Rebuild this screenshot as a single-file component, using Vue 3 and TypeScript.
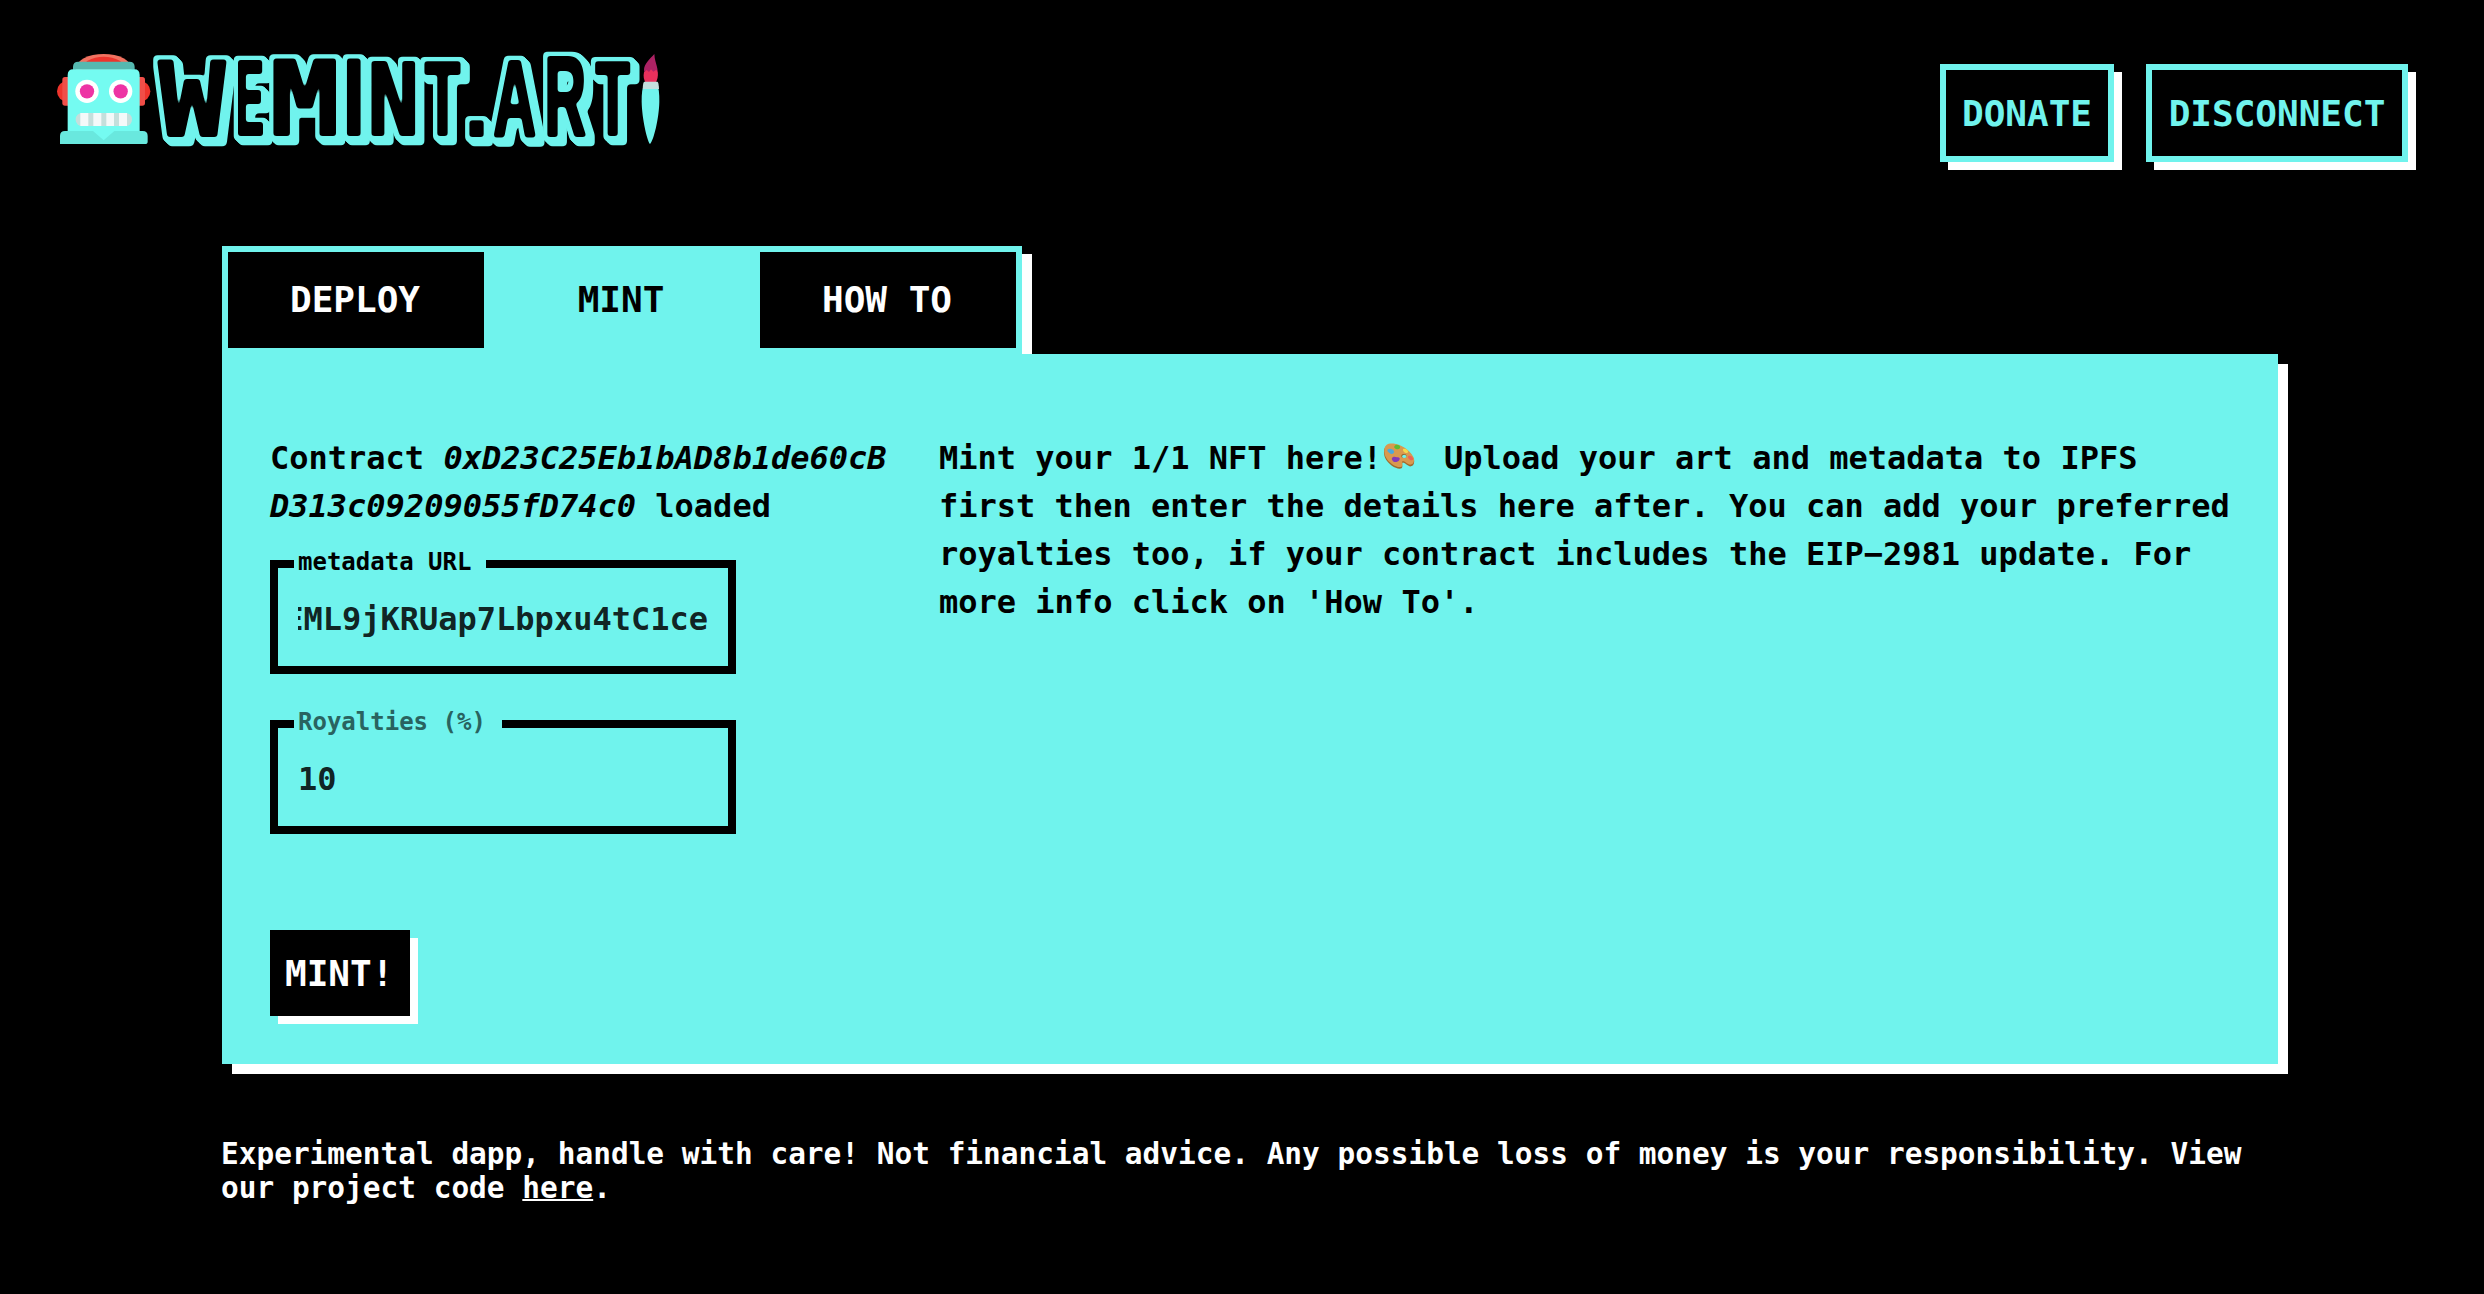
<script setup lang="ts">
import { ref } from 'vue'

interface LogoLetter {
  char: string
  left: number
  right: number
  top: number
  bottom: number
  inkLeft: number
  inkRight: number
  mono?: boolean
}

// Target boxes in logo units, and each glyph's ink extent at a 100 unit font size.
const letters: LogoLetter[] = [
  { char: 'W', left: 352, right: 560, top: 87, bottom: 321, inkLeft: 0, inkRight: 60.2, mono: true },
  { char: 'E', left: 595, right: 668, top: 91, bottom: 318, inkLeft: 7.3, inkRight: 61.7 },
  { char: 'M', left: 698, right: 890, top: 87, bottom: 319, inkLeft: 3.6, inkRight: 56.6, mono: true },
  { char: 'I', left: 921, right: 962, top: 85, bottom: 317, inkLeft: 6.9, inkRight: 21.3 },
  { char: 'N', left: 990, right: 1130, top: 93, bottom: 319, inkLeft: 4.1, inkRight: 56.1, mono: true },
  { char: 'T', left: 1155, right: 1260, top: 91, bottom: 317, inkLeft: 2.1, inkRight: 59 },
  { char: '.', left: 1289, right: 1331, top: 110, bottom: 320, inkLeft: 7.1, inkRight: 20.9 },
  { char: 'A', left: 1357, right: 1491, top: 87, bottom: 320, inkLeft: 0, inkRight: 71.8 },
  { char: 'R', left: 1523, right: 1640, top: 78, bottom: 322, inkLeft: 7.3, inkRight: 71.6 },
  { char: 'T', left: 1667, right: 1769, top: 91, bottom: 317, inkLeft: 2.1, inkRight: 59 },
]

function place(l: LogoLetter): string {
  const sx = (l.right - l.left - 6) / (l.inkRight - l.inkLeft)
  const sy = (l.bottom - l.top - 6) / (l.mono ? 72.9 : 68.8)
  return `translate(${l.left + 3 - l.inkLeft * sx} ${l.bottom - 3}) scale(${sx} ${sy})`
}

const tabs = ['DEPLOY', 'MINT', 'HOW TO']
const activeTab = ref('MINT')
const extrusion = [2, 4, 6, 8, 10, 12, 14]
</script>

<template>
  <div class="page">
    <header class="header">
      <svg class="logo" viewBox="0 0 1920 390" role="img" aria-label="wemint.art">
        <defs>
          <filter id="sticker" x="-60%" y="-30%" width="240%" height="170%" color-interpolation-filters="sRGB">
            <feMorphology in="SourceAlpha" operator="dilate" radius="3 3" result="bold" />
            <feGaussianBlur in="bold" stdDeviation="4" />
            <feComponentTransfer result="core">
              <feFuncA type="linear" slope="4" intercept="-1.5" />
            </feComponentTransfer>
            <feMorphology in="core" operator="dilate" radius="12" />
            <feGaussianBlur stdDeviation="5" />
            <feComponentTransfer result="rim">
              <feFuncA type="linear" slope="4" intercept="-1.2" />
            </feComponentTransfer>
            <feFlood flood-color="#70f3ed" />
            <feComposite in2="rim" operator="in" result="outline" />
            <feOffset v-for="d in extrusion" :key="d" in="outline" :dx="d" :dy="d" :result="'o' + d" />
            <feMerge>
              <feMergeNode in="outline" />
              <feMergeNode v-for="d in extrusion" :key="d" :in="'o' + d" />
              <feMergeNode in="core" />
            </feMerge>
          </filter>
        </defs>

        <g class="robot">
          <ellipse cx="191" cy="116" rx="84" ry="44" fill="#f27260" />
          <ellipse cx="191" cy="118" rx="66" ry="38" fill="#ee342c" />
          <path d="M99 119v-8q0-16 16-16h153q16 0 16 16v8z" fill="#55b9b0" />
          <circle cx="82" cy="184" r="31" fill="#ee342c" />
          <circle cx="300" cy="184" r="31" fill="#ee342c" />
          <rect x="67" y="141" width="30" height="86" rx="8" fill="#f04e48" />
          <rect x="285" y="141" width="30" height="86" rx="8" fill="#f04e48" />
          <path d="M83 335V135q0-17 17-17h183q16 0 16 17v200z" fill="#74fbf1" />
          <path d="M60 342v-24q0-15 15-15h84l32 28 32-28h85q15 0 15 15v17q0 7-8 7z" fill="#69e8de" />
          <circle cx="141" cy="184" r="35" fill="#fff" />
          <circle cx="242" cy="184" r="35" fill="#fff" />
          <circle cx="141" cy="184" r="21.500" fill="#ed34a4" />
          <circle cx="242" cy="184" r="21.500" fill="#ed34a4" />
          <rect x="107" y="249" width="169" height="39" rx="19" fill="#c5dfdc" />
          <path d="M121 249h24v39h-24zM160 249h24v39h-24zM199 249h23v39h-23zM237 249h24v39h-24z" fill="#f4f9f9" />
        </g>

        <g v-for="(l, i) in letters" :key="i" filter="url(#sticker)">
          <text class="logo-letter" :class="{ mono: l.mono }" :transform="place(l)">{{ l.char }}</text>
        </g>

        <g class="brush">
          <path d="M1843 72c-14 15-31 30-31 49l5 18h34c7-25-6-35-8-67z" fill="#ad2264" />
          <path d="M1812 127l8-7 7 6 6-8 7 7 9-6 4 8c2 12-1 23-6 31h-30c-5-8-8-19-5-31z" fill="#e8305c" />
          <path d="M1811 174q-6-3-6 41c1 50 16 116 25 127 11-10 27-77 28-127q0-42-5-41z" fill="#70f3ed" />
          <path d="M1813 155h39q4 0 5 22h-49q1-22 5-22z" fill="#c4dedd" />
        </g>
      </svg>

      <nav class="actions">
        <button class="outlined" type="button">DONATE</button>
        <button class="outlined wide" type="button">DISCONNECT</button>
      </nav>
    </header>

    <main class="content">
      <div class="tabs">
        <button
          v-for="tab in tabs"
          :key="tab"
          type="button"
          class="tab"
          :class="{ active: tab === activeTab }"
          @click="activeTab = tab"
        >{{ tab }}</button>
      </div>

      <section class="panel">
        <div class="form">
          <p class="contract">Contract <em>0xD23C25Eb1bAD8b1de60cB<br>D313c09209055fD74c0</em> loaded</p>
          <div class="field">
            <label class="label focus">metadata URL</label>
            <div class="value end"><span>EML9jKRUap7Lbpxu4tC1ce</span></div>
          </div>
          <div class="field second">
            <label class="label long">Royalties (%)</label>
            <div class="value"><span>10</span></div>
          </div>
          <button class="mint" type="button">MINT!</button>
        </div>

        <p class="intro">
          Mint your 1/1 NFT here!<svg class="palette" viewBox="0 0 96 80" aria-hidden="true">
            <path d="M2 25C3 8 16 1 38 5c26 5 50 27 56 45 3 14-3 22-12 22-9-2-13-10-22-12-6 3 2 12-4 18-8 3-20-1-30-8C10 58 0 42 2 25z" fill="#a06a2c" />
            <path d="M3 21C4 4 17-1 38 3c26 5 50 27 56 44 2 13-4 20-12 20-9-2-13-10-22-12-6 3 2 12-4 18-8 3-19-1-29-8C11 54 1 38 3 21z" fill="#d9994f" />
            <ellipse cx="63" cy="40" rx="8" ry="6.500" fill="#8c5c25" />
            <ellipse cx="64" cy="41.500" rx="6.500" ry="5" fill="#70f3ed" />
            <path d="M34 9c5-6 15-4 17 2 2 7-4 10-10 8-5-1-10-5-7-10z" fill="#5dbb32" />
            <path d="M13 20c7-5 17-1 20 6 1 8-9 10-14 5-4-3-9-7-6-11z" fill="#4ba9dc" />
            <path d="M62 18c7-2 14 4 14 9-1 6-10 4-13 0-3-3-4-7-1-9z" fill="#f5d84a" />
            <path d="M77 40c7-2 15 4 15 10-3 6-10 3-13-1-3-3-5-7-2-9z" fill="#ec6257" />
            <path d="M29 44c5-4 9 1 14 0 5-1 10 3 6 8-5 8-17 9-21 2-3-4-3-8 1-10z" fill="#8438b8" />
          </svg> Upload your art and metadata to IPFS<br>
          first then enter the details here after. You can add your preferred<br>
          royalties too, if your contract includes the EIP−2981 update. For<br>
          more info click on 'How To'.
        </p>
      </section>

      <footer class="footer">
        Experimental dapp, handle with care! Not financial advice. Any possible loss of money is your responsibility. View<br>
        our project code <a href="#">here</a>.
      </footer>
    </main>
  </div>
</template>

<style>
html,
body {
  margin: 0;
  background: #000;
}
</style>

<style scoped>
.page {
  box-sizing: border-box;
  height: 1294px;
  overflow: hidden;
  background: #000;
  color: #fff;
  font-family: 'DejaVu Sans Mono', monospace;
  font-weight: 700;
}

button {
  box-sizing: border-box;
  margin: 0;
  border: 0;
  border-radius: 0;
  font: 700 36px/42px 'DejaVu Sans Mono', monospace;
  white-space: nowrap;
}

.header {
  display: flex;
  align-items: flex-start;
  justify-content: space-between;
  height: 246px;
  box-sizing: border-box;
  padding: 30px 76px 0 40px;
}

.logo {
  display: block;
  width: 640px;
  height: 130px;
}

.logo-letter {
  font: 700 100px 'Liberation Sans', Arial, sans-serif;
  fill: #000;
}

.logo-letter.mono {
  font-family: 'DejaVu Sans Mono', monospace;
}

.actions {
  display: flex;
  gap: 32px;
  padding-top: 34px;
}

.outlined {
  width: 174px;
  height: 98px;
  padding: 2px 16px 0;
  border: 6px solid #70f3ed;
  background: #000;
  color: #70f3ed;
  box-shadow: 8px 8px 0 #fff;
}

.outlined.wide {
  width: 262px;
}

.content {
  width: 2056px;
  margin-left: 222px;
}

.tabs {
  display: grid;
  grid-template-columns: 256px 276px 256px;
  width: 800px;
  height: 108px;
  box-sizing: border-box;
  border: 6px solid #70f3ed;
  box-shadow: 10px 8px 0 #fff;
}

.tab {
  padding: 0 2px 0 0;
  background: #000;
  color: #fff;
}

.tab.active {
  background: #70f3ed;
  color: #000;
}

.panel {
  position: relative;
  display: flex;
  box-sizing: border-box;
  height: 710px;
  padding: 80px 48px 48px;
  background: #70f3ed;
  color: #000;
  box-shadow: 10px 10px 0 #fff;
}

.form {
  display: flex;
  flex-direction: column;
  align-items: flex-start;
  width: 621px;
  margin-right: 48px;
}

.contract,
.intro {
  margin: 0;
  font-size: 32px;
  line-height: 48px;
  white-space: nowrap;
}

.field {
  position: relative;
  box-sizing: border-box;
  width: 466px;
  height: 114px;
  margin-top: 30px;
  padding: 0 20px;
  border: 8px solid #000;
}

.field.second {
  margin-top: 46px;
}

/* The label sits on the border and cuts a notch in it. */
.label {
  position: absolute;
  top: -20px;
  left: 16px;
  box-sizing: border-box;
  width: 192px;
  padding-left: 4px;
  background: #70f3ed;
  color: #296360;
  font-size: 24px;
  line-height: 28px;
  white-space: nowrap;
}

.label.focus {
  color: #000;
}

.label.long {
  width: 208px;
}

.value {
  display: flex;
  overflow: hidden;
  padding-top: 27px;
  color: rgba(0, 0, 0, 0.87);
  font-size: 32px;
  line-height: 48px;
}

.value.end {
  justify-content: flex-end;
}

.mint {
  width: 140px;
  height: 86px;
  margin-top: auto;
  padding: 2px 0 0 15px;
  background: #000;
  color: #fff;
  text-align: left;
  box-shadow: 8px 8px 0 #fff;
}

.palette {
  display: inline-block;
  width: 32px;
  height: 26px;
  margin: 0 9.5px 0 1px;
  vertical-align: 0;
}

.footer {
  margin: 73px 0 0 -1px;
  font-size: 29.44px;
  line-height: 34px;
  white-space: nowrap;
}

.footer a {
  color: inherit;
  text-decoration: underline;
  text-decoration-thickness: 2px;
}
</style>
